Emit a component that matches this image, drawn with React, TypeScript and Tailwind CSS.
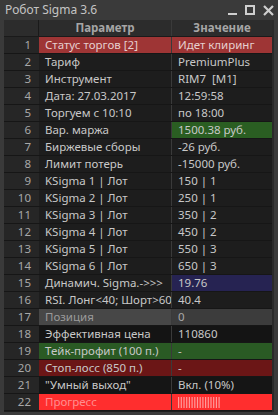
import React from 'react';

type Row = {
  label: string;
  value: React.ReactNode;
  labelBg?: string;
  valueBg?: string;
  labelColor?: string;
  valueColor?: string;
};

function ProgressBars() {
  return (
    <svg width="44" height="11" viewBox="0 0 44 11">
      {Array.from({ length: 16 }).map((_, i) => (
        <rect key={i} x={i * 2.7} y={0} width={1.2} height={11} fill="#ff9a9a" />
      ))}
    </svg>
  );
}

const rows: Row[] = [
  { label: 'Статус торгов [2]', value: 'Идет клиринг', labelBg: 'bg-[#9e3535]', valueBg: 'bg-[#9e3535]', labelColor: 'text-[#e6cfcf]', valueColor: 'text-[#e6cfcf]' },
  { label: 'Тариф', value: 'PremiumPlus' },
  { label: 'Инструмент', value: 'RIM7  [M1]' },
  { label: 'Дата: 27.03.2017', value: '12:59:58' },
  { label: 'Торгуем с 10:10', value: 'по 18:00' },
  { label: 'Вар. маржа', value: '1500.38 руб.', valueBg: 'bg-[#2a5e22]' },
  { label: 'Биржевые сборы', value: '-26 руб.' },
  { label: 'Лимит потерь', value: '-15000 руб.' },
  { label: 'KSigma 1 | Лот', value: '150 | 1' },
  { label: 'KSigma 2 | Лот', value: '250 | 1' },
  { label: 'KSigma 3 | Лот', value: '350 | 2' },
  { label: 'KSigma 4 | Лот', value: '450 | 2' },
  { label: 'KSigma 5 | Лот', value: '550 | 3' },
  { label: 'KSigma 6 | Лот', value: '650 | 3' },
  { label: 'Динамич. Sigma.->>>', value: '19.76', valueBg: 'bg-[#262352]' },
  { label: 'RSI. Лонг<40; Шорт>60', value: '40.4' },
  { label: 'Позиция', value: '0', labelBg: 'bg-[#474747]', valueBg: 'bg-[#3c3c3c]', labelColor: 'text-[#9a9a9a]', valueColor: 'text-[#a8a8a8]' },
  { label: 'Эффективная цена', value: '110860', labelBg: 'bg-[#141414]', valueBg: 'bg-[#141414]' },
  { label: 'Тейк-профит (100 п.)', value: '-', labelBg: 'bg-[#2a5a24]', valueBg: 'bg-[#2a5a24]' },
  { label: 'Стоп-лосс (850 п.)', value: '-', labelBg: 'bg-[#6b1616]', valueBg: 'bg-[#6b1616]' },
  { label: '"Умный выход"', value: 'Вкл. (10%)', labelBg: 'bg-[#151515]', valueBg: 'bg-[#151515]' },
  { label: 'Прогресс', value: <ProgressBars />, labelBg: 'bg-[#ff2e2e]', valueBg: 'bg-[#ff2e2e]', labelColor: 'text-[#ff8f8f]' },
];

export default function App() {
  return (
    <div
      className="w-[278px] h-[415px] bg-[#3a3a3a] flex flex-col overflow-hidden text-[11.5px] leading-none"
      style={{ fontFamily: '"Noto Sans", "Open Sans", sans-serif' }}
    >
      {/* Title bar */}
      <div className="h-[20px] flex items-center justify-between pl-[5px] pr-[4px] text-[#c4c4c4] text-[12px]">
        <span>Робот Sigma 3.6</span>
        <div className="flex items-center gap-[8px]">
          <span className="w-[9px] h-[2px] bg-[#cfcfcf] mt-[8px]" />
          <span className="w-[10px] h-[10px] border-[2px] border-[#cfcfcf]" />
          <svg width="11" height="11" viewBox="0 0 11 11">
            <path d="M1 1 L10 10 M10 1 L1 10" stroke="#cfcfcf" strokeWidth="2.2" />
          </svg>
        </div>
      </div>

      {/* Table */}
      <div className="flex-1 flex pl-[4px] pb-[3px]">
        <div className="w-[268px] flex flex-col bg-[#1d1d1d]">
          {/* Header */}
          <div className="flex h-[17px] bg-[#2c2c2c] font-bold text-[#a6a6a6] border-b border-[#1a1a1a]">
            <div className="w-[35px] border-r border-[#1a1a1a]" />
            <div className="w-[133px] flex items-center justify-center border-r border-[#3a3a3a]">Параметр</div>
            <div className="flex-1 flex items-center justify-center">Значение</div>
          </div>
          {rows.map((r, i) => (
            <div key={i} className="flex h-[17px] border-b border-[#161616]">
              <div className="w-[35px] bg-[#262626] flex items-center justify-end pr-[8px] text-[#a8a8a8]">
                {i + 1}
              </div>
              <div
                className={`w-[133px] flex items-center pl-[6px] whitespace-pre overflow-hidden border-r border-[#3a3a3a] ${r.labelBg ?? 'bg-[#1d1d1d]'} ${r.labelColor ?? 'text-[#c8c8c8]'}`}
              >
                {r.label}
              </div>
              <div
                className={`flex-1 flex items-center pl-[6px] whitespace-pre overflow-hidden ${r.valueBg ?? 'bg-[#1d1d1d]'} ${r.valueColor ?? 'text-[#c8c8c8]'}`}
              >
                {r.value}
              </div>
            </div>
          ))}
        </div>
        <div className="w-[2px] bg-[#2a2a2a]" />
      </div>
    </div>
  );
}
